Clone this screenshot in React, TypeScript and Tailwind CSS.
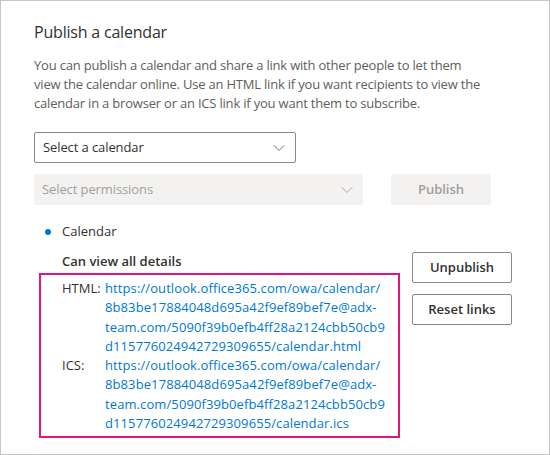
import { ChevronDown } from "lucide-react"

const font = { fontFamily: '"Open Sans", "Noto Sans", sans-serif' }

const htmlLink = [
  "https://outlook.office365.com/owa/calendar/",
  "8b83be17884048d695a42f9ef89bef7e@adx-",
  "team.com/5090f39b0efb4ff28a2124cbb50cb9",
  "d115776024942729309655/calendar.html",
]
const icsLink = [
  "https://outlook.office365.com/owa/calendar/",
  "8b83be17884048d695a42f9ef89bef7e@adx-",
  "team.com/5090f39b0efb4ff28a2124cbb50cb9",
  "d115776024942729309655/calendar.ics",
]

function LinkRow({ label, lines }: { label: string; lines: string[] }) {
  return (
    <div className="flex leading-[19.25px]">
      <div className="w-[43px] shrink-0 text-[#323130]">{label}</div>
      <div className="tracking-[0.1px] text-[#0078d4]">
        {lines.map((l) => (
          <div key={l}>{l}</div>
        ))}
      </div>
    </div>
  )
}

export default function App() {
  return (
    <div
      className="w-[550px] h-[455px] border border-[#c6c6c6] bg-white pl-[33px] pt-[18px] text-[13px] leading-[19px] text-[#323130]"
      style={font}
    >
      <h1 className="text-[16px] leading-[26px] font-medium tracking-[-0.2px] text-[#323130]">Publish a calendar</h1>

      <p className="mt-[11px] tracking-[-0.2px] text-[#605e5c]">
        <span className="block">You can publish a calendar and share a link with other people to let them</span>
        <span className="block">view the calendar online. Use an HTML link if you want recipients to view the</span>
        <span className="block">calendar in a browser or an ICS link if you want them to subscribe.</span>
      </p>

      <div className="mt-[19px] flex h-[31px] w-[262px] items-center justify-between rounded-[2px] border border-[#8a8886] pl-[8px] pr-[6px] tracking-[-0.1px]">
        <span>Select a calendar</span>
        <ChevronDown size={20} strokeWidth={1} className="text-[#605e5c]" />
      </div>

      <div className="mt-[11px] flex items-center">
        <div className="flex h-[31px] w-[329px] items-center justify-between rounded-[2px] bg-[#f3f2f1] pl-[8px] pr-[6px] tracking-[-0.1px] text-[#a19f9d]">
          <span>Select permissions</span>
          <ChevronDown size={20} strokeWidth={1} className="text-[#a19f9d]" />
        </div>
        <div className="ml-[28px] flex h-[31px] w-[100px] items-center justify-center rounded-[2px] bg-[#f3f2f1] font-semibold text-[#a19f9d]">
          Publish
        </div>
      </div>

      <div className="mt-[17px] flex items-center">
        <span className="ml-[11px] h-[6px] w-[6px] rounded-full bg-[#0078d4]" />
        <span className="ml-[11px]">Calendar</span>
      </div>

      <div className="mt-[11px] flex">
        <div className="w-[366px] shrink-0">
          <div className="pl-[28px] font-semibold">Can view all details</div>
          <div className="ml-[5px] mt-[2px] w-[361px] border-2 border-[#e3157b] pl-[21px] pt-[4px] pb-[3px]">
            <LinkRow label="HTML:" lines={htmlLink} />
            <LinkRow label="ICS:" lines={icsLink} />
          </div>
        </div>
        <div className="ml-[12px] flex flex-col gap-[11px]">
          <div className="flex h-[31px] w-[100px] items-center justify-center rounded-[2px] border border-[#8a8886] font-semibold">
            Unpublish
          </div>
          <div className="flex h-[31px] w-[100px] items-center justify-center rounded-[2px] border border-[#8a8886] font-semibold">
            Reset links
          </div>
        </div>
      </div>
    </div>
  )
}
